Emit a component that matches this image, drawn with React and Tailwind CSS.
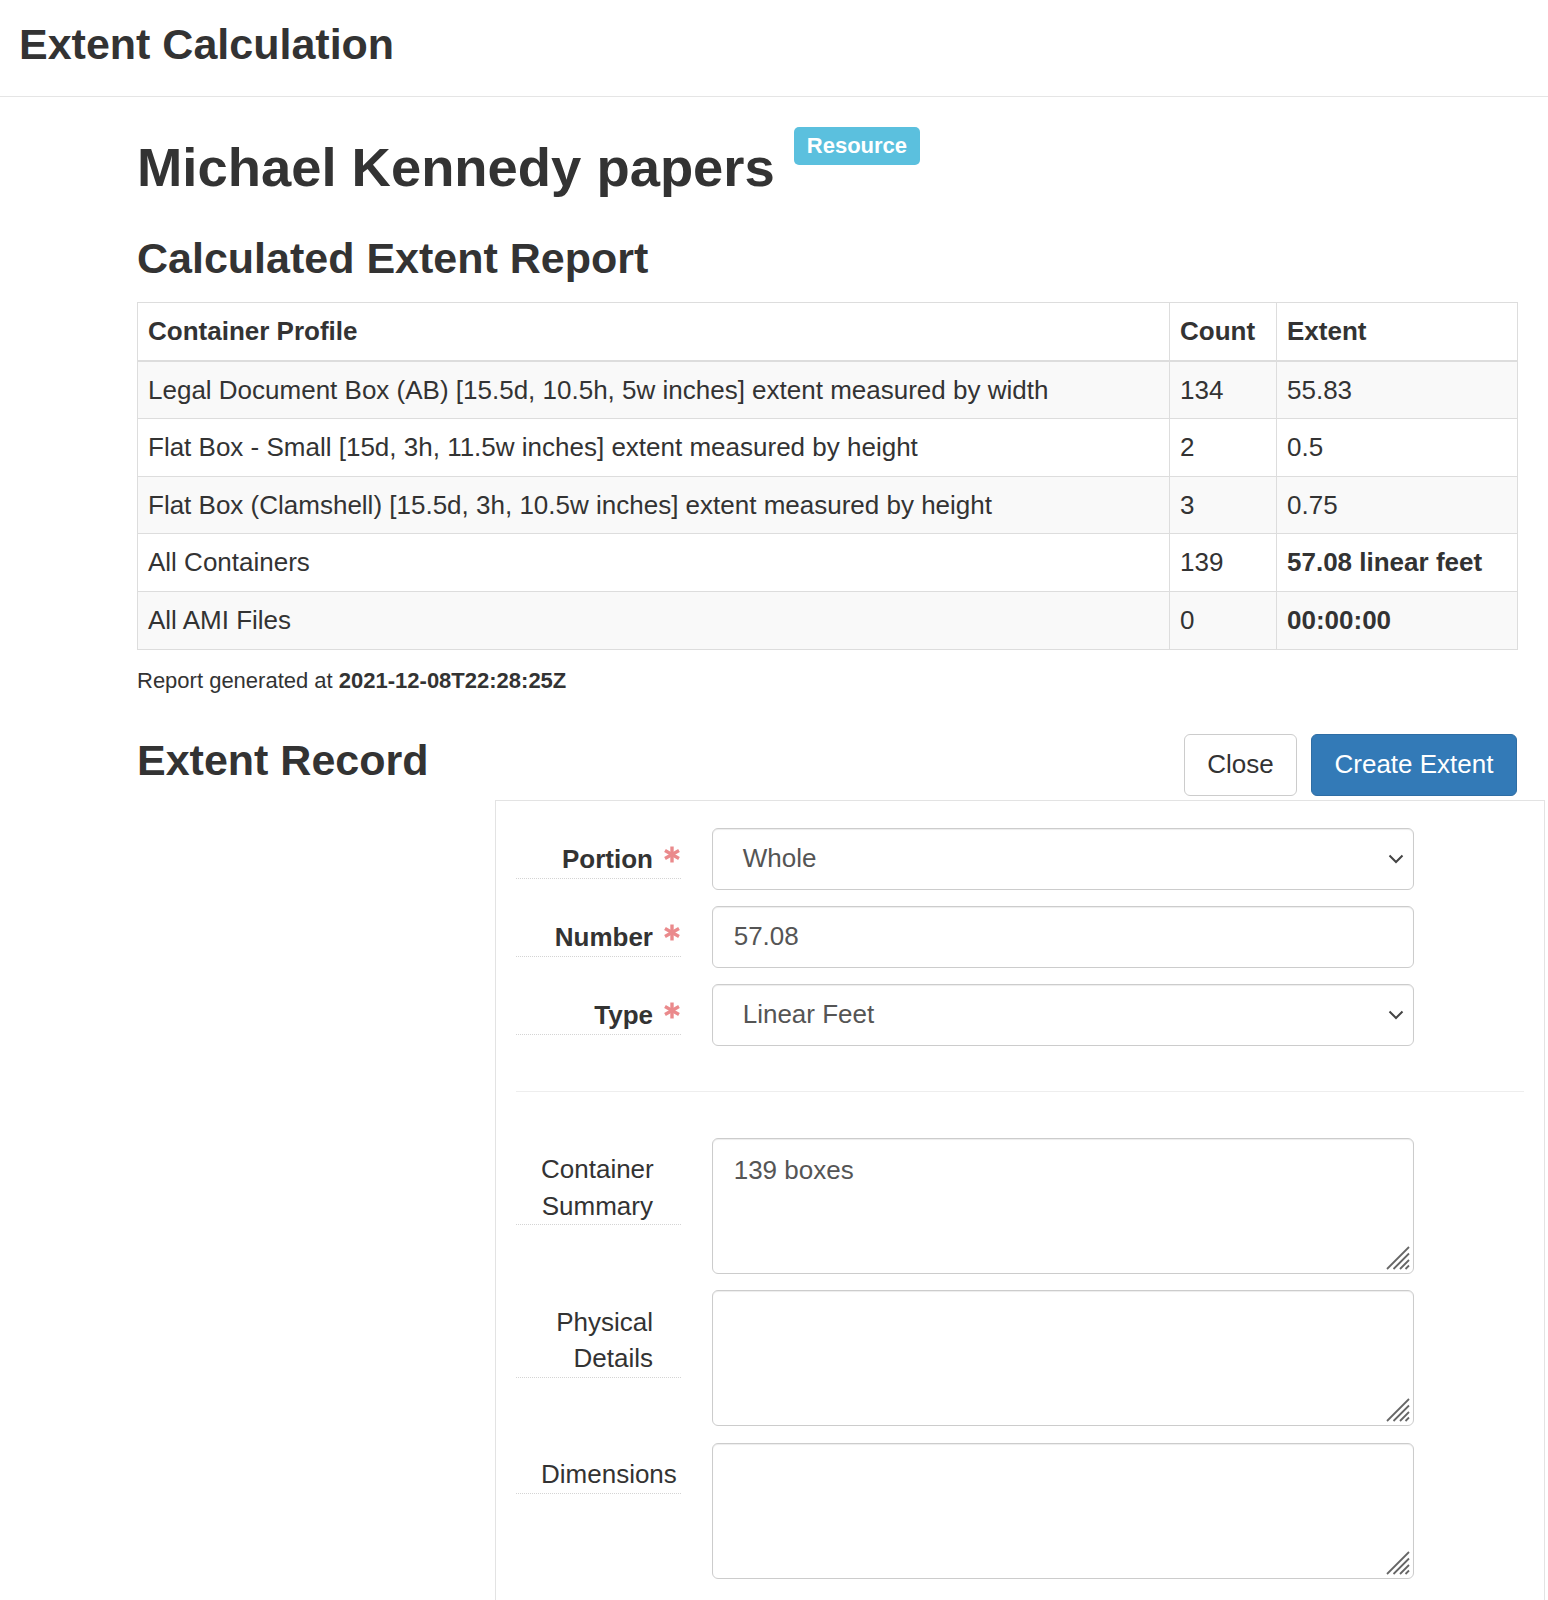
import React from "react";

function Req() {
  return (
    <svg
      className="absolute right-0 top-[18px]"
      width="18"
      height="17"
      viewBox="0 0 18 17"
    >
      <g stroke="#ea8a8c" strokeWidth="3.4">
        <line x1="9" y1="0.5" x2="9" y2="16.5" />
        <line x1="2" y1="4.5" x2="16" y2="12.5" />
        <line x1="2" y1="12.5" x2="16" y2="4.5" />
      </g>
    </svg>
  );
}

function Chevron() {
  return (
    <svg width="16" height="10" viewBox="0 0 16 10" className="shrink-0">
      <polyline
        points="1.5,1.5 8,8 14.5,1.5"
        fill="none"
        stroke="#444"
        strokeWidth="2"
      />
    </svg>
  );
}

function Grip() {
  return (
    <svg
      className="absolute right-[3px] bottom-[3px]"
      width="24"
      height="24"
      viewBox="0 0 24 24"
    >
      <g stroke="#666" strokeWidth="1.8">
        <line x1="23" y1="1" x2="1" y2="23" />
        <line x1="23" y1="7.5" x2="7.5" y2="23" />
        <line x1="23" y1="14" x2="14" y2="23" />
        <line x1="23" y1="19.5" x2="19.5" y2="23" />
      </g>
    </svg>
  );
}

function Row({ label, required, children }) {
  return (
    <div className="flex items-start mb-[16px]">
      <div
        className={
          required
            ? "relative w-[165px] shrink-0 pl-[25px] pr-[28px] pt-[13.5px] text-right leading-[36.5px] border-b border-dotted border-[#d4d4d4] font-bold"
            : "relative w-[165px] shrink-0 pl-[25px] pr-[28px] pt-[13.5px] text-right leading-[36.5px] border-b border-dotted border-[#d4d4d4]"
        }
      >
        {label}
        {required && <Req />}
      </div>
      <div className="ml-[30.7px] w-[702.6px]">{children}</div>
    </div>
  );
}

function SelectBox({ value }) {
  return (
    <div className="h-[62px] rounded-[6px] border border-[#ccc] bg-white shadow-[inset_0_1px_1px_rgba(0,0,0,0.075)] flex items-center justify-between pl-[30px] pr-[9px] text-[#555] leading-[36.5px]">
      <span>{value}</span>
      <Chevron />
    </div>
  );
}

function TextInput({ value }) {
  return (
    <div className="h-[62px] rounded-[6px] border border-[#ccc] bg-white shadow-[inset_0_1px_1px_rgba(0,0,0,0.075)] flex items-center pl-[21px] text-[#555] leading-[36.5px]">
      {value}
    </div>
  );
}

function TextArea({ value }) {
  return (
    <div className="relative h-[136px] rounded-[6px] border border-[#ccc] bg-white shadow-[inset_0_1px_1px_rgba(0,0,0,0.075)] pl-[21px] pt-[12.9px] text-[#555] leading-[36.5px]">
      {value}
      <Grip />
    </div>
  );
}

export default function App() {
  const rows = [
    [
      "Legal Document Box (AB) [15.5d, 10.5h, 5w inches] extent measured by width",
      "134",
      "55.83",
      false,
    ],
    [
      "Flat Box - Small [15d, 3h, 11.5w inches] extent measured by height",
      "2",
      "0.5",
      false,
    ],
    [
      "Flat Box (Clamshell) [15.5d, 3h, 10.5w inches] extent measured by height",
      "3",
      "0.75",
      false,
    ],
    ["All Containers", "139", "57.08 linear feet", true],
    ["All AMI Files", "0", "00:00:00", true],
  ];

  return (
    <div className="min-h-[1600px] bg-white text-[#333] text-[26px] font-['Liberation_Sans',Arial,sans-serif]">
      <header className="h-[97px] border-b border-[#e5e5e5] pl-[19px] pt-[21px]">
        <h1 className="text-[43px] leading-[47px] font-bold">
          Extent Calculation
        </h1>
      </header>

      <main className="pl-[137px] pb-[40px]">
        <div className="flex items-start mt-[30px]">
          <h1 className="mt-[10.6px] text-[54.4px] leading-[59.4px] font-bold">
            Michael Kennedy papers
          </h1>
          <span className="ml-[19px] h-[38px] px-[13px] flex items-center rounded-[5px] bg-[#5bc0de] text-white text-[22px] leading-[24px] font-bold">
            Resource
          </span>
        </div>

        <h2 className="mt-[38px] text-[43px] leading-[47px] font-bold">
          Calculated Extent Report
        </h2>

        <table className="mt-[20px] w-[1380px] table-fixed border-collapse leading-[36.6px]">
          <thead>
            <tr>
              <th className="w-[1032px] text-left font-bold px-[10px] py-[10px] border border-[#ddd] border-b-2">
                Container Profile
              </th>
              <th className="w-[107px] text-left font-bold px-[10px] py-[10px] border border-[#ddd] border-b-2">
                Count
              </th>
              <th className="w-[241px] text-left font-bold px-[10px] py-[10px] border border-[#ddd] border-b-2">
                Extent
              </th>
            </tr>
          </thead>
          <tbody>
            {rows.map((r, i) => (
              <tr key={i} className={i % 2 === 0 ? "bg-[#f9f9f9]" : "bg-white"}>
                <td className="px-[10px] py-[10px] border border-[#ddd] whitespace-nowrap">
                  {r[0]}
                </td>
                <td className="px-[10px] py-[10px] border border-[#ddd]">
                  {r[1]}
                </td>
                <td
                  className={
                    r[3]
                      ? "px-[10px] py-[10px] border border-[#ddd] font-bold whitespace-nowrap"
                      : "px-[10px] py-[10px] border border-[#ddd] whitespace-nowrap"
                  }
                >
                  {r[2]}
                </td>
              </tr>
            ))}
          </tbody>
        </table>

        <p className="mt-[15.4px] text-[22px] leading-[31.4px]">
          Report generated at <strong className="font-bold">2021-12-08T22:28:25Z</strong>
        </p>

        <div className="mt-[37.6px] w-[1380px] flex items-start justify-between">
          <h2 className="mt-[2.6px] text-[43px] leading-[47px] font-bold">
            Extent Record
          </h2>
          <div className="flex gap-[14px]">
            <button className="w-[113px] h-[62px] rounded-[6px] border border-[#ccc] bg-white text-[#333] flex items-center justify-center">
              Close
            </button>
            <button className="w-[206px] h-[62px] rounded-[6px] border border-[#2e6da4] bg-[#337ab7] text-white flex items-center justify-center">
              Create Extent
            </button>
          </div>
        </div>

        <section className="mt-[4.3px] ml-[358px] w-[1050px] border-l border-t border-r border-[#e3e3e3] px-[20px] pt-[26.4px] pb-[30px]">
          <Row label="Portion" required>
            <SelectBox value="Whole" />
          </Row>
          <Row label="Number" required>
            <TextInput value="57.08" />
          </Row>
          <Row label="Type" required>
            <SelectBox value="Linear Feet" />
          </Row>

          <div className="h-px bg-[#eee] mt-[45.3px] mb-[46px]" />

          <div className="[&>div]:mb-[16.5px]">
            <Row label="Container Summary">
              <TextArea value="139 boxes" />
            </Row>
            <Row label="Physical Details">
              <TextArea value="" />
            </Row>
            <Row label="Dimensions">
              <TextArea value="" />
            </Row>
          </div>
        </section>
      </main>
    </div>
  );
}
